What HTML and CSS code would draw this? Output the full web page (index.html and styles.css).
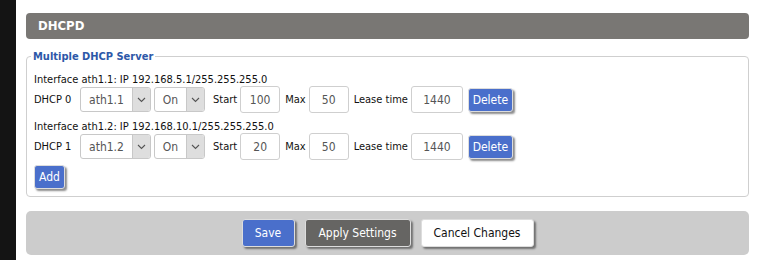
FILE: index.html
```html
<!DOCTYPE html>
<html>
<head>
<meta charset="utf-8">
<link rel="stylesheet" href="styles.css">
</head>
<body>
<div class="side"></div>
<main class="content">
  <h2 class="title">DHCPD</h2>
  <fieldset class="group">
    <legend>Multiple DHCP Server</legend>
    <div class="iface">Interface ath1.1: IP 192.168.5.1/255.255.255.0</div>
    <div class="row">
      <span class="lbl">DHCP 0</span>
      <div class="sel w-if"><span class="val">ath1.1</span><span class="arr"><svg width="9" height="6" viewBox="0 0 9 6"><path d="M1 1l3.5 3.5L8 1" fill="none" stroke="#555" stroke-width="1.1"/></svg></span></div>
      <div class="sel w-on"><span class="val">On</span><span class="arr"><svg width="9" height="6" viewBox="0 0 9 6"><path d="M1 1l3.5 3.5L8 1" fill="none" stroke="#555" stroke-width="1.1"/></svg></span></div>
      <span class="lbl2">Start</span>
      <div class="inp w-start">100</div>
      <span class="lbl2">Max</span>
      <div class="inp w-max">50</div>
      <span class="lbl2">Lease time</span>
      <div class="inp w-lease">1440</div>
      <button class="btn blue del">Delete</button>
    </div>
    <div class="iface">Interface ath1.2: IP 192.168.10.1/255.255.255.0</div>
    <div class="row">
      <span class="lbl">DHCP 1</span>
      <div class="sel w-if"><span class="val">ath1.2</span><span class="arr"><svg width="9" height="6" viewBox="0 0 9 6"><path d="M1 1l3.5 3.5L8 1" fill="none" stroke="#555" stroke-width="1.1"/></svg></span></div>
      <div class="sel w-on"><span class="val">On</span><span class="arr"><svg width="9" height="6" viewBox="0 0 9 6"><path d="M1 1l3.5 3.5L8 1" fill="none" stroke="#555" stroke-width="1.1"/></svg></span></div>
      <span class="lbl2">Start</span>
      <div class="inp w-start">20</div>
      <span class="lbl2">Max</span>
      <div class="inp w-max">50</div>
      <span class="lbl2">Lease time</span>
      <div class="inp w-lease">1440</div>
      <button class="btn blue del">Delete</button>
    </div>
    <button class="btn blue add">Add</button>
  </fieldset>
  <div class="footer">
    <button class="btn blue save">Save</button>
    <button class="btn dark apply">Apply Settings</button>
    <button class="btn white cancel">Cancel Changes</button>
  </div>
</main>
</body>
</html>
```
FILE: styles.css
```css
html, body { margin: 0; padding: 0; }
body {
  display: flex;
  background: #fff;
  width: 770px;
  height: 260px;
  overflow: hidden;
  font-family: "DejaVu Sans Condensed", "DejaVu Sans", sans-serif;
  font-size: 11px;
  color: #111;
}
.side { width: 16px; background: #141414; flex: none; }
.content { width: 723px; margin-left: 10px; padding-top: 13px; }
.title {
  margin: 0;
  height: 26px;
  line-height: 26px;
  background: #797774;
  color: #fff;
  border-radius: 4px;
  font-size: 13px;
  font-weight: bold;
  padding-left: 12px;
}
.group {
  margin: 11px 0 0 0;
  border: 1px solid #cfcfcf;
  border-radius: 4px;
  padding: 3px 8px 5px 7px;
  height: 147px;
  box-sizing: border-box;
}
.group legend {
  color: #2d58a8;
  font-weight: bold;
  font-size: 11px;
  padding: 0 2px;
  margin-left: -3px;
}
.iface { height: 13px; line-height: 13px; margin-top: 7px; }
.row { display: flex; align-items: center; height: 27px; }
.lbl { width: 46px; }
.lbl2 { margin: 0 3px 0 5px; }
.sel {
  display: flex;
  height: 25px;
  box-sizing: border-box;
  border: 1px solid #c8c8c8;
  border-radius: 3px;
  margin-right: 3px;
  color: #555;
  font-size: 12px;
  overflow: hidden;
}
.sel .val { flex: 1; display: flex; align-items: center; justify-content: center; }
.sel .arr {
  width: 17px;
  background: #dedede;
  border-left: 1px solid #c8c8c8;
  display: flex;
  align-items: center;
  justify-content: center;
}
.w-if { width: 71px; }
.w-on { width: 51px; }
.inp {
  height: 27px;
  box-sizing: border-box;
  border: 1px solid #cfcfcf;
  border-radius: 3px;
  display: flex;
  align-items: center;
  justify-content: center;
  color: #555;
  font-size: 12px;
}
.w-start { width: 40px; }
.w-max { width: 40px; }
.w-lease { width: 52px; }
.btn {
  font-family: inherit;
  border: 1px solid #ddd;
  border-radius: 3px;
  box-shadow: 2px 2px 2px rgba(0,0,0,0.45);
  font-size: 12px;
  padding: 0;
  cursor: pointer;
}
.blue { background: #4a6fcb; color: #fff; }
.dark { background: #666563; color: #fff; }
.white { background: #fff; color: #111; }
.del { width: 45px; height: 24px; margin-left: 5px; }
.add { width: 31px; height: 24px; margin-top: 5px; margin-left: 0; }
.footer {
  margin-top: 14px;
  height: 44px;
  background: #cccccc;
  border-radius: 5px;
  display: flex;
  align-items: center;
  justify-content: center;
  gap: 10px;
}
.save { width: 53px; height: 28px; }
.apply { width: 106px; height: 28px; }
.cancel { width: 113px; height: 28px; }
```
